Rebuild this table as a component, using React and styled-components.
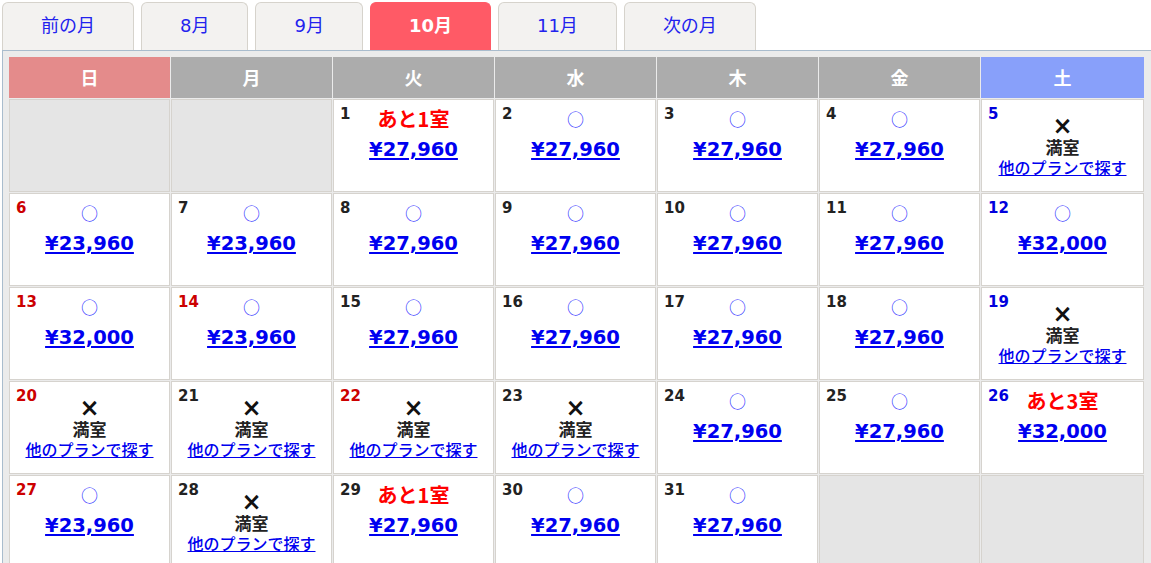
import React from 'react';
import styled, { createGlobalStyle } from 'styled-components';

const GlobalStyle = createGlobalStyle`
  body {
    margin: 0;
    overflow: hidden;
    background: #fff;
    font-family: "DejaVu Sans", "Noto Sans CJK JP", sans-serif;
  }
`;

const StyledPage = styled.div`
  padding: 2px 0 0 2px;
`;

const StyledTabBar = styled.div`
  display: flex;
  gap: 7px;
  align-items: flex-end;
`;

const StyledTab = styled.a`
  display: block;
  height: 48px;
  box-sizing: border-box;
  padding: 0 38px 2px;
  line-height: 45px;
  font-size: 18px;
  border: 1px solid ${(p) => (p.$active ? '#ff5a66' : '#d6d3cc')};
  border-bottom: none;
  border-radius: 6px 6px 0 0;
  background: ${(p) => (p.$active ? '#ff5a66' : '#f3f2f0')};
  color: ${(p) => (p.$active ? '#fff' : '#2222ee')};
  font-weight: ${(p) => (p.$active ? 'bold' : 'normal')};
  text-decoration: none;
  cursor: pointer;
`;

const StyledCalendar = styled.div`
  width: 1160px;
  box-sizing: border-box;
  background: #ebebeb;
  border-top: 1px solid #a9bccd;
  border-left: 1px solid #a9bccd;
  padding: 6px 0 0 6px;
`;

const StyledGrid = styled.div`
  display: grid;
  grid-template-columns: repeat(6, 161px) 1fr;
  width: 1135px;
  gap: 1px;
`;

const headColors = { sun: '#e48b8b', sat: '#88a0fa', day: '#acacac' };

const StyledHeadCell = styled.div`
  height: 41px;
  line-height: 41px;
  text-align: center;
  background: ${(p) => headColors[p.$tone]};
  color: #fff;
  font-weight: bold;
  font-size: 18px;
  font-family: "Noto Sans CJK JP", sans-serif;
`;

const StyledDayCell = styled.div`
  display: grid;
  grid-template: 1fr / 1fr;
  height: 93px;
  box-sizing: border-box;
  border: 1px solid #d6d3ce;
  background: ${(p) => (p.$empty ? '#e5e5e5' : '#fff')};

  & > * {
    grid-area: 1 / 1;
  }
`;

const numColors = { sun: '#cc0000', sat: '#0000dd', day: '#222' };

const StyledDayNum = styled.span`
  justify-self: start;
  align-self: start;
  padding: 5px 0 0 6px;
  font-size: 15px;
  line-height: 18px;
  font-weight: bold;
  color: ${(p) => numColors[p.$tone]};
`;

const StyledSlot = styled.div`
  justify-self: center;
  align-self: start;
  display: flex;
  flex-direction: column;
  align-items: center;
  padding-top: ${(p) => (p.$full ? '16px' : '4px')};
  line-height: ${(p) => (p.$full ? '20.5px' : '30px')};
`;

const StyledMark = styled.span`
  font-family: "Noto Sans CJK JP", sans-serif;
  font-size: 17px;
  color: #3333ff;
`;

const StyledRemain = styled.span`
  font-family: "Noto Sans CJK JP", sans-serif;
  font-size: 20px;
  font-weight: bold;
  color: #ff0000;
`;

const StyledPrice = styled.a`
  font-size: 19.5px;
  font-weight: bold;
  color: #0000f0;
  text-decoration: underline;
  text-decoration-thickness: 2px;
  text-underline-offset: 2px;
  cursor: pointer;
  margin-top: 1px;
`;

const StyledCross = styled.span`
  font-size: 24px;
  font-weight: bold;
  color: #111;
`;

const StyledFull = styled.span`
  font-family: "Noto Sans CJK JP", sans-serif;
  font-size: 17px;
  font-weight: bold;
  color: #222;
`;

const StyledOtherLink = styled.a`
  font-family: "Noto Sans CJK JP", sans-serif;
  font-size: 16px;
  font-weight: 500;
  color: #0000ee;
  text-decoration: underline;
  cursor: pointer;
`;

const tabs = [
  { label: '前の月' },
  { label: '8月' },
  { label: '9月' },
  { label: '10月', active: true },
  { label: '11月' },
  { label: '次の月' },
];

const weekdays = [
  { label: '日', tone: 'sun' },
  { label: '月', tone: 'day' },
  { label: '火', tone: 'day' },
  { label: '水', tone: 'day' },
  { label: '木', tone: 'day' },
  { label: '金', tone: 'day' },
  { label: '土', tone: 'sat' },
];

// status: o = available, r = rooms left, x = full
const days = [
  null,
  null,
  { d: 1, s: 'r', left: 1, p: '¥27,960' },
  { d: 2, s: 'o', p: '¥27,960' },
  { d: 3, s: 'o', p: '¥27,960' },
  { d: 4, s: 'o', p: '¥27,960' },
  { d: 5, s: 'x' },
  { d: 6, s: 'o', p: '¥23,960' },
  { d: 7, s: 'o', p: '¥23,960' },
  { d: 8, s: 'o', p: '¥27,960' },
  { d: 9, s: 'o', p: '¥27,960' },
  { d: 10, s: 'o', p: '¥27,960' },
  { d: 11, s: 'o', p: '¥27,960' },
  { d: 12, s: 'o', p: '¥32,000' },
  { d: 13, s: 'o', p: '¥32,000' },
  { d: 14, s: 'o', p: '¥23,960', holiday: true },
  { d: 15, s: 'o', p: '¥27,960' },
  { d: 16, s: 'o', p: '¥27,960' },
  { d: 17, s: 'o', p: '¥27,960' },
  { d: 18, s: 'o', p: '¥27,960' },
  { d: 19, s: 'x' },
  { d: 20, s: 'x' },
  { d: 21, s: 'x' },
  { d: 22, s: 'x', holiday: true },
  { d: 23, s: 'x' },
  { d: 24, s: 'o', p: '¥27,960' },
  { d: 25, s: 'o', p: '¥27,960' },
  { d: 26, s: 'r', left: 3, p: '¥32,000' },
  { d: 27, s: 'o', p: '¥23,960' },
  { d: 28, s: 'x' },
  { d: 29, s: 'r', left: 1, p: '¥27,960' },
  { d: 30, s: 'o', p: '¥27,960' },
  { d: 31, s: 'o', p: '¥27,960' },
  null,
  null,
];

const toneOf = (day, i) => {
  const col = i % 7;
  if (col === 0 || day.holiday) return 'sun';
  if (col === 6) return 'sat';
  return 'day';
};

const DayCell = ({ day, index }) => {
  if (!day) return <StyledDayCell $empty />;

  return (
    <StyledDayCell>
      <StyledDayNum $tone={toneOf(day, index)}>{day.d}</StyledDayNum>
      {day.s === 'x' ? (
        <StyledSlot $full>
          <StyledCross>×</StyledCross>
          <StyledFull>満室</StyledFull>
          <StyledOtherLink>他のプランで探す</StyledOtherLink>
        </StyledSlot>
      ) : (
        <StyledSlot>
          {day.s === 'r' ? (
            <StyledRemain>あと{day.left}室</StyledRemain>
          ) : (
            <StyledMark>○</StyledMark>
          )}
          <StyledPrice>{day.p}</StyledPrice>
        </StyledSlot>
      )}
    </StyledDayCell>
  );
};

const App = () => {
  return (
    <StyledPage>
      <GlobalStyle />
      <StyledTabBar>
        {tabs.map((t) => (
          <StyledTab key={t.label} $active={t.active}>
            {t.label}
          </StyledTab>
        ))}
      </StyledTabBar>
      <StyledCalendar>
        <StyledGrid>
          {weekdays.map((w) => (
            <StyledHeadCell key={w.label} $tone={w.tone}>
              {w.label}
            </StyledHeadCell>
          ))}
          {days.map((day, i) => (
            <DayCell key={i} day={day} index={i} />
          ))}
        </StyledGrid>
      </StyledCalendar>
    </StyledPage>
  );
};

export default App;
